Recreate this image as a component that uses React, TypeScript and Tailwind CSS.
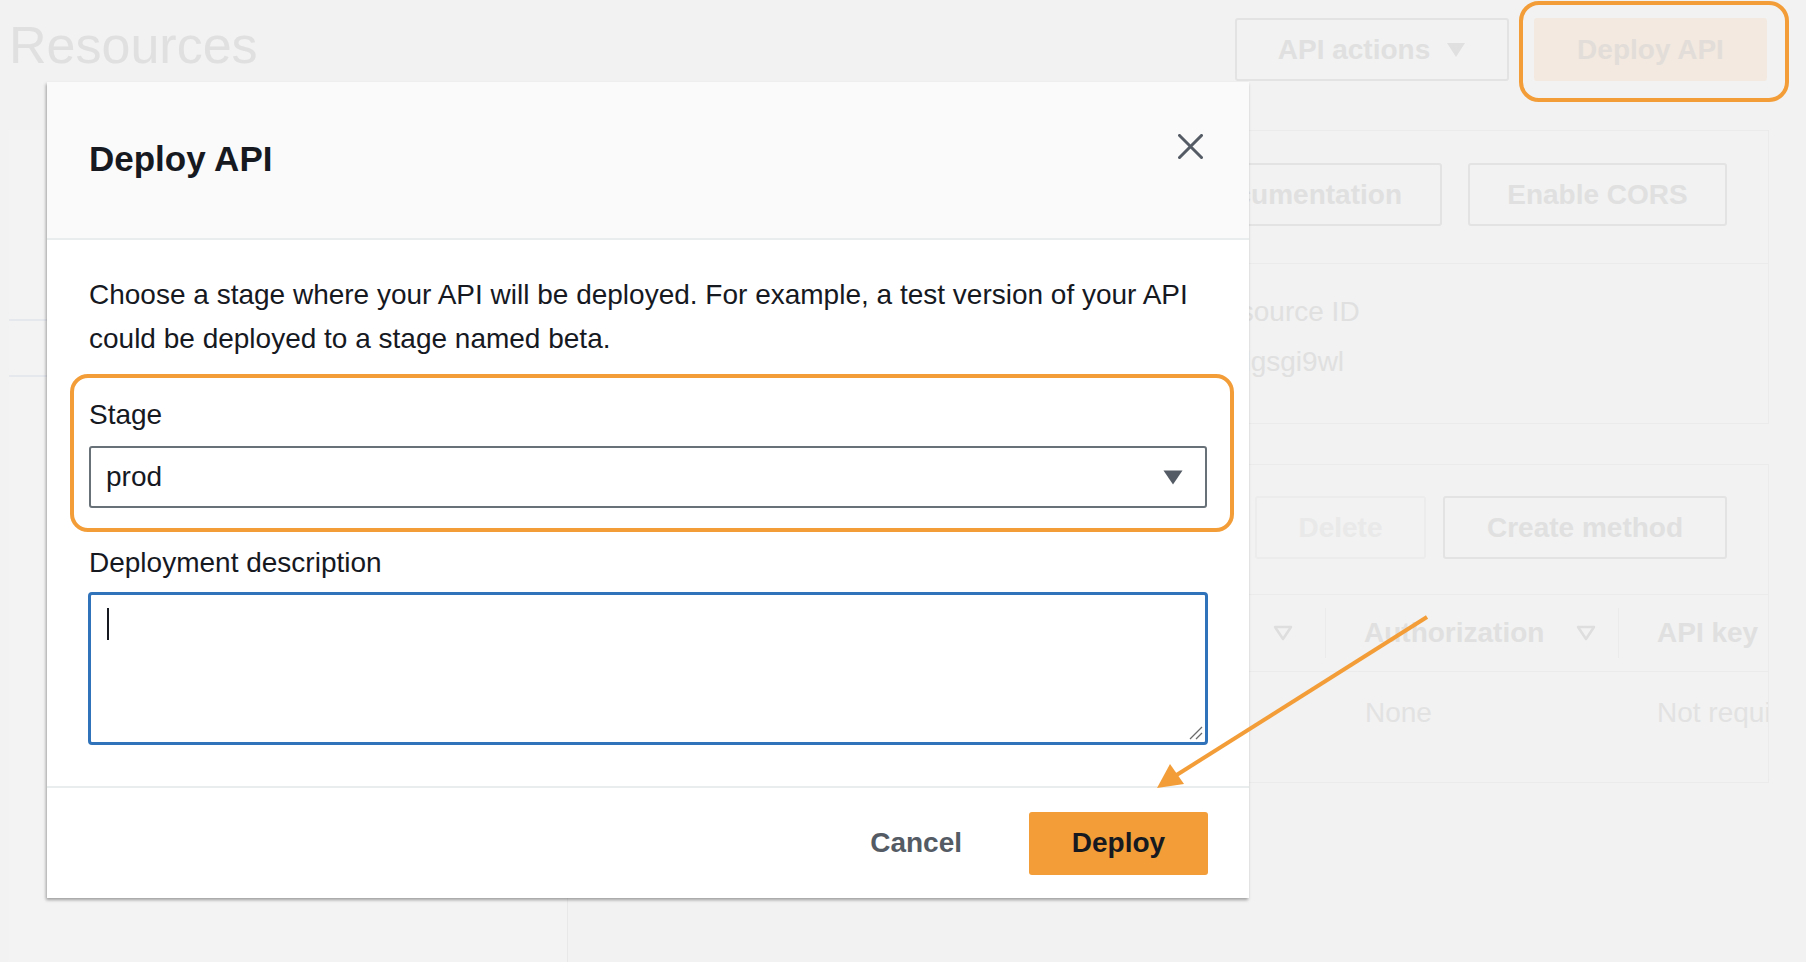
import React from "react";

const FONT = { fontFamily: '"Liberation Sans", Arial, sans-serif' };

function DownTri({ className = "" }: { className?: string }) {
  return (
    <svg width="20" height="16" viewBox="0 0 20 16" className={className}>
      <path d="M2 2 L18 2 L10 14 Z" fill="none" stroke="#dedede" strokeWidth="2.5" strokeLinejoin="round" />
    </svg>
  );
}

export default function App() {
  return (
    <div className="relative w-[1806px] h-[962px] bg-[#f2f2f2] overflow-hidden" style={FONT}>
      {/* Background page (dimmed) */}
      <div className="flex items-start justify-between pl-[9px] pr-[39px] pt-[18px] h-[130px]">
        <div className="text-[52px] leading-[52px] text-[#e0e0e0] mt-[1px]">Resources</div>
        <div className="flex items-center gap-[25px]">
          <div className="w-[274px] h-[63px] border-2 border-[#e3e3e3] rounded-[3px] flex items-center justify-center gap-[16px] text-[28px] font-bold text-[#e0e0e0]">
            <span>API actions</span>
            <svg width="20" height="16" viewBox="0 0 20 16"><path d="M1 1 L19 1 L10 15 Z" fill="#e0e0e0" /></svg>
          </div>
          <div className="w-[233px] h-[63px] bg-[#f3e9e0] rounded-[3px] flex items-center justify-center text-[28px] font-bold text-[#e2ddd8]">
            Deploy API
          </div>
        </div>
      </div>

      <div className="flex h-[832px]">
        <div className="shrink-0 ml-[9px] w-[559px] border-r border-[#e8e8e8] bg-[#f3f3f3] flex flex-col">
          <div className="h-[191px] border-b-2 border-[#e5e9ee]" />
          <div className="h-[56px] border-b-2 border-[#e5e9ee]" />
        </div>
        <div className="flex-1 min-w-0 ml-[22px] mr-[37px] flex flex-col gap-[40px]">
          {/* card 1 */}
          <div className="h-[294px] border border-[#ebebeb] flex flex-col">
            <div className="h-[133px] flex justify-end items-start pt-[32px] pr-[41px] gap-[26px] border-b border-[#ebebeb]">
              <div className="h-[63px] px-[38px] border-2 border-[#e3e3e3] rounded-[3px] flex items-center text-[28px] font-bold text-[#e0e0e0] whitespace-nowrap">
                Enable API Documentation
              </div>
              <div className="w-[259px] h-[63px] border-2 border-[#e3e3e3] rounded-[3px] flex items-center justify-center text-[28px] font-bold text-[#e0e0e0]">
                Enable CORS
              </div>
            </div>
            <div className="flex flex-col pl-[613px] pt-[30px] gap-[14px] text-[28px] text-[#e0e0e0]">
              <div className="leading-[36px]">Resource ID</div>
              <div className="leading-[36px]">r7hlgsgi9wl</div>
            </div>
          </div>
          {/* card 2 */}
          <div className="h-[319px] border border-[#ebebeb] flex flex-col overflow-hidden">
            <div className="h-[129px] flex justify-end items-start pt-[31px] pr-[41px] gap-[17px]">
              <div className="w-[171px] h-[63px] border-2 border-[#ececec] rounded-[3px] flex items-center justify-center text-[28px] font-bold text-[#e9e9e9]">
                Delete
              </div>
              <div className="w-[284px] h-[63px] border-2 border-[#e3e3e3] rounded-[3px] flex items-center justify-center text-[28px] font-bold text-[#e0e0e0]">
                Create method
              </div>
            </div>
            <div className="h-[78px] border-t border-b border-[#ebebeb] flex items-center text-[28px] font-bold text-[#e0e0e0] whitespace-nowrap">
              <div className="shrink-0 w-[735px] h-[50px] flex items-center justify-end pr-[32px] border-r border-[#ebebeb]">
                <span className="mr-[26px]">Integration type</span>
                <DownTri />
              </div>
              <div className="shrink-0 w-[293px] h-[50px] flex items-center pl-[38px] border-r border-[#ebebeb]">
                <span>Authorization</span>
                <DownTri className="ml-[32px]" />
              </div>
              <div className="pl-[38px]">API key</div>
            </div>
            <div className="h-[82px] flex items-center text-[28px] text-[#e2e2e2] whitespace-nowrap">
              <div className="shrink-0 w-[735px]" />
              <div className="shrink-0 w-[293px] pl-[39px]">None</div>
              <div className="pl-[38px]">Not required</div>
            </div>
          </div>
        </div>
      </div>

      {/* Highlight around background Deploy API button */}
      <div className="absolute left-[1519px] top-[1px] w-[270px] h-[101px] border-4 border-[#f29d38] rounded-[20px]" />

      {/* Modal */}
      <div className="absolute left-[47px] top-[82px] w-[1202px] h-[816px] bg-white flex flex-col shadow-[-1px_2px_3px_rgba(0,0,0,0.35)]">
        <div className="h-[158px] bg-[#fafafa] border-b-2 border-[#eaeded] flex justify-between pl-[42px] pr-[46px]">
          <div className="self-center text-[35px] font-bold text-[#16191f] mb-[2px]">Deploy API</div>
          <svg width="25" height="25" viewBox="0 0 25 25" className="mt-[52px]">
            <path d="M1.5 1.5 L23.5 23.5 M23.5 1.5 L1.5 23.5" stroke="#545b64" strokeWidth="3" strokeLinecap="square" />
          </svg>
        </div>

        <div className="flex-1 px-[42px] pt-[33px] text-[#16191f] text-[28px]">
          <p className="leading-[44px]">
            Choose a stage where your API will be deployed. For example, a test version of your API could be deployed to a stage named beta.
          </p>
          <div className="mt-[34px] leading-[40px]">Stage</div>
          <div className="mt-[11px] h-[62px] border-2 border-[#687078] rounded-[3px] flex items-center justify-between pl-[15px] pr-[22px]">
            <span className="leading-[40px]">prod</span>
            <svg width="20" height="15" viewBox="0 0 20 15"><path d="M0.5 0.5 L19.5 0.5 L10 14.5 Z" fill="#545b64" strokeLinejoin="round" /></svg>
          </div>
          <div className="mt-[35px] leading-[40px]">Deployment description</div>
          <div className="relative mt-[9px] -mx-[1px] h-[153px] border-[3px] border-[#3173ba] rounded-[4px]">
            <div className="absolute left-[16px] top-[13px] w-[2px] h-[32px] bg-[#16191f]" />
            <svg width="14" height="14" viewBox="0 0 14 14" className="absolute right-[2px] bottom-[2px]">
              <path d="M13 1 L1 13 M13 7 L7 13" stroke="#6b6b6b" strokeWidth="1.3" />
            </svg>
          </div>
        </div>

        <div className="h-[112px] border-t-2 border-[#eaeded] flex items-center justify-end pr-[41px] gap-[67px]">
          <div className="text-[28px] font-bold text-[#545b64]">Cancel</div>
          <div className="w-[179px] h-[63px] bg-[#f29d38] rounded-[3px] flex items-center justify-center text-[28px] font-bold text-[#16191f]">
            Deploy
          </div>
        </div>

        {/* highlight around Stage */}
        <div className="absolute left-[23px] top-[292px] w-[1164px] h-[158px] border-4 border-[#f29d38] rounded-[18px]" />
      </div>

      {/* Arrow annotation */}
      <svg className="absolute left-0 top-0 pointer-events-none" width="1806" height="962" viewBox="0 0 1806 962">
        <line x1="1427" y1="617" x2="1175" y2="776" stroke="#f29d38" strokeWidth="4" />
        <path d="M1157 788 L1170 764 L1184 784 Z" fill="#f29d38" />
      </svg>
    </div>
  );
}
